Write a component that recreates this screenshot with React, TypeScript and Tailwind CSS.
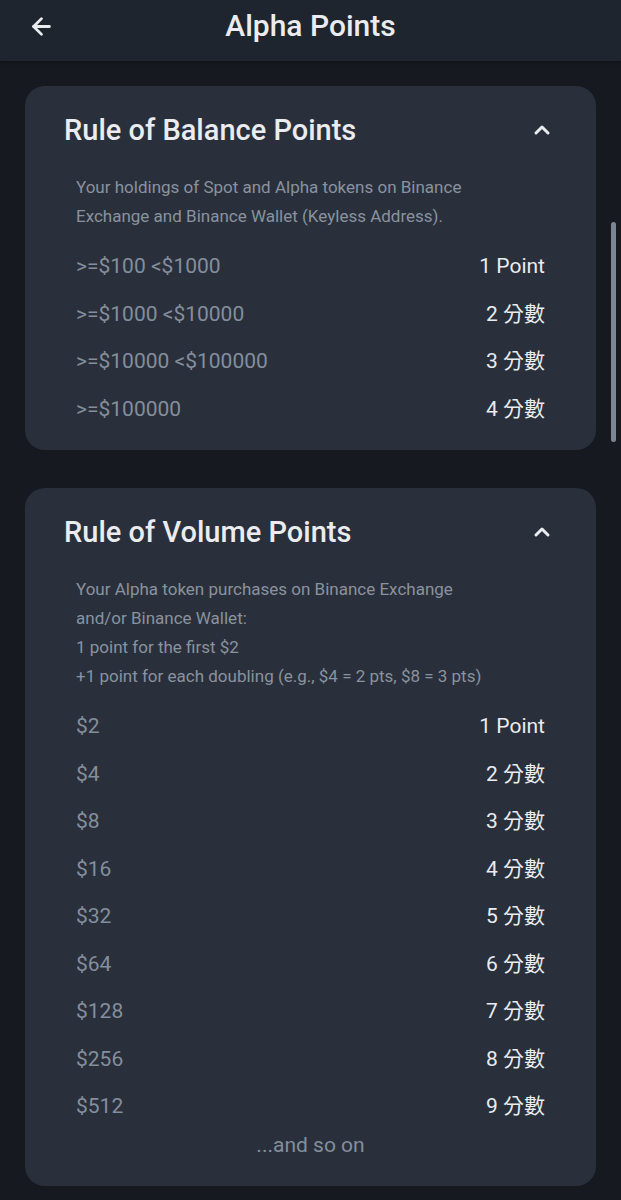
import { ArrowLeft, ChevronUp } from "lucide-react";

const balanceRows = [
    { label: ">=$100 <$1000", value: "1 Point" },
    { label: ">=$1000 <$10000", value: "2 分數" },
    { label: ">=$10000 <$100000", value: "3 分數" },
    { label: ">=$100000", value: "4 分數" },
];

const volumeRows = [
    { label: "$2", value: "1 Point" },
    { label: "$4", value: "2 分數" },
    { label: "$8", value: "3 分數" },
    { label: "$16", value: "4 分數" },
    { label: "$32", value: "5 分數" },
    { label: "$64", value: "6 分數" },
    { label: "$128", value: "7 分數" },
    { label: "$256", value: "8 分數" },
    { label: "$512", value: "9 分數" },
];

const font = { fontFamily: '"Roboto", "Noto Sans CJK TC", sans-serif' };

const RuleCard = ({
    title,
    lines,
    rows,
    footer,
}: {
    title: string;
    lines: string[];
    rows: { label: string; value: string }[];
    footer?: string;
}) => (
    <div className={`rounded-[20px] bg-[#29303b] pl-[39px] pr-[51px] pt-[27px] ${footer ? "pb-[30px]" : "pb-[17px]"}`}>
        <div className="flex items-center justify-between">
            <h2 className="text-[29px] font-medium leading-[34px] text-[#eaecef]">{title}</h2>
            <ChevronUp className="w-6 h-6 text-[#eaecef] mr-[-9px]" strokeWidth={3} />
        </div>
        <div className="mt-[26px] pl-[12px] text-[17px] leading-[28.7px] text-[#8a929f]">
            {lines.map((l) => (
                <div key={l}>{l}</div>
            ))}
        </div>
        <div className="mt-[13px] pl-[12px]">
            {rows.map((r) => (
                <div key={r.label} className="flex items-center justify-between h-[47.5px]">
                    <span className="text-[21px] text-[#848e9c]">{r.label}</span>
                    <span className="text-[21px] text-[#eaecef]">{r.value}</span>
                </div>
            ))}
        </div>
        {footer && (
            <div className="mt-[3px] pl-[12px] text-center text-[21px] leading-[22px] text-[#848e9c]">{footer}</div>
        )}
    </div>
);

export default function App() {
    return (
        <div className="relative min-h-[1200px] bg-[#161a20]" style={font}>
            <div className="relative flex h-[61px] items-center justify-center bg-[#1f252e] shadow-[0_2px_4px_rgba(0,0,0,0.25)]">
                <ArrowLeft className="absolute left-[28px] top-[13px] w-[27px] h-[27px] text-[#eaecef]" strokeWidth={2.5} />
                <h1 className="text-[30px] font-medium text-[#eaecef] -mt-[10px]">Alpha Points</h1>
            </div>

            <div className="flex flex-col gap-[38px] px-[25px] pt-[25px] pb-[14px]">
                <RuleCard
                    title="Rule of Balance Points"
                    lines={[
                        "Your holdings of Spot and Alpha tokens on Binance",
                        "Exchange and Binance Wallet (Keyless Address).",
                    ]}
                    rows={balanceRows}
                />
                <RuleCard
                    title="Rule of Volume Points"
                    lines={[
                        "Your Alpha token purchases on Binance Exchange",
                        "and/or Binance Wallet:",
                        "1 point for the first $2",
                        "+1 point for each doubling (e.g., $4 = 2 pts, $8 = 3 pts)",
                    ]}
                    rows={volumeRows}
                    footer="...and so on"
                />
            </div>

            {/* overlay scrollbar */}
            <div className="absolute right-[5px] top-[222px] h-[220px] w-[5px] rounded-full bg-[#7d8592]" />
        </div>
    );
}
